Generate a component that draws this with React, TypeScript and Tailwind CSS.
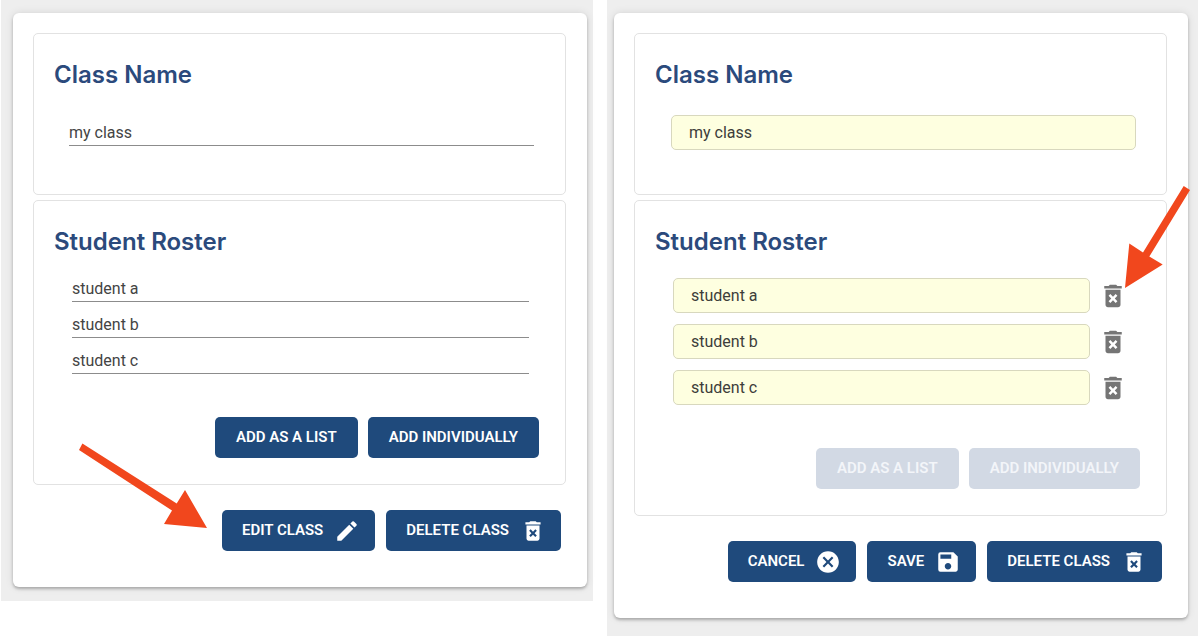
import { useState, type ReactNode } from "react";
import { MdCancel, MdDeleteForever, MdEdit, MdSave } from "react-icons/md";

const students = ["student a", "student b", "student c"];

function Section({ children }: { children: ReactNode }) {
  return <section className="rounded-[5px] border border-[#e2e2e2] px-5 pt-[27px]">{children}</section>;
}

function Heading({ children }: { children: ReactNode }) {
  return (
    <h2 className="font-[Inter,sans-serif] text-2xl leading-7 font-semibold text-[#2b4a7c]">{children}</h2>
  );
}

function Field({ id, label, value, editing }: { id: string; label?: string; value: string; editing: boolean }) {
  const [text, setText] = useState(value);
  return (
    <input
      id={id}
      type="text"
      aria-label={label}
      value={text}
      readOnly={!editing}
      onChange={(event) => setText(event.target.value)}
      className={
        editing
          ? "h-[35px] w-full min-w-0 rounded-[5px] border border-[#d8d8be] bg-[#feffe0] px-[17px] text-base leading-6 text-[#3d3d3a] outline-none"
          : "h-[31px] w-full min-w-0 border-b border-[#8c8c8c] bg-transparent pt-1 text-base leading-6 text-[#444] outline-none"
      }
    />
  );
}

function Button({ children, icon, disabled }: { children: ReactNode; icon?: ReactNode; disabled?: boolean }) {
  return (
    <button
      type="button"
      disabled={disabled}
      className={`flex h-[41px] items-center gap-[11px] rounded-[5px] bg-[#1f4a7c] text-[15px] font-semibold whitespace-nowrap text-white disabled:bg-[#d2d9e4] disabled:text-[#f3f5f9] ${icon ? "pr-[15px] pl-5" : "px-[21px]"}`}
    >
      {children}
      {icon}
    </button>
  );
}

function ClassCard({ id, editing, children }: { id: string; editing: boolean; children: ReactNode }) {
  return (
    <div className="flex flex-col rounded-md bg-white pt-5 pr-[21px] pb-9 pl-5 shadow-[0_2px_3px_rgba(0,0,0,0.25),0_0_8px_rgba(0,0,0,0.1)]">
      <div className="flex flex-col gap-[5px]">
        <Section>
          <Heading>
            <label htmlFor={`${id}-name`}>Class Name</label>
          </Heading>
          <div className={`mt-[26px] flex ${editing ? "mr-[10px] ml-4 pb-[44px]" : "mr-[11px] ml-[15px] pb-12"}`}>
            <Field id={`${id}-name`} value="my class" editing={editing} />
          </div>
        </Section>
        <Section>
          <Heading>Student Roster</Heading>
          <ul className={editing ? "mt-[22px] mr-[18px] ml-[18px] flex flex-col gap-[11px]" : "mt-[15px] mr-4 ml-[18px] flex flex-col gap-[5px]"}>
            {students.map((name, index) => (
              <li key={name} className="flex items-center gap-2">
                <Field id={`${id}-student-${index}`} label={`Student ${index + 1}`} value={name} editing={editing} />
                {editing && (
                  <button type="button" aria-label={`Delete ${name}`} className="relative shrink-0 text-[#757575]">
                    <MdDeleteForever className="size-[30px]" />
                    {index === 0 && (
                      <svg
                        viewBox="0 0 66 102"
                        aria-hidden="true"
                        className="pointer-events-none absolute bottom-[23px] left-[27px] h-[102px] w-[66px] max-w-none"
                      >
                        <path
                          d="M58.7 0 65 4 24.3 70.6 37.7 78.6 0 102 4.3 57.6 18 66.6Z"
                          fill="#f1471d"
                        />
                      </svg>
                    )}
                  </button>
                )}
              </li>
            ))}
          </ul>
          <div className="mt-[43px] mr-[6px] flex flex-wrap justify-end gap-[10px] pb-[26px]">
            <Button disabled={editing}>ADD AS A LIST</Button>
            <Button disabled={editing}>ADD INDIVIDUALLY</Button>
          </div>
        </Section>
      </div>
      <div className="mt-[25px] mr-[5px] flex flex-wrap justify-end gap-[11px]">{children}</div>
    </div>
  );
}

export default function App() {
  return (
    <main className="grid grid-cols-[592fr_591fr] items-start gap-[14px] bg-white pr-[2px] pl-px font-[Roboto,sans-serif]">
      <div className="bg-[#eeeeee] pt-[13px] pr-[6px] pb-[14px] pl-3">
        <ClassCard id="view" editing={false}>
          <div className="relative">
            <Button icon={<MdEdit className="size-[26px]" />}>EDIT CLASS</Button>
            <svg
              viewBox="0 0 128 86"
              aria-hidden="true"
              className="pointer-events-none absolute right-full bottom-[22px] mr-[15px] h-[86px] w-[128px] max-w-none"
            >
              <path d="M3.4 0.5 97.7 60.5 106 47 128 85 85 81 93 67.5 0 7Z" fill="#f1471d" />
            </svg>
          </div>
          <Button icon={<MdDeleteForever className="size-[26px]" />}>DELETE CLASS</Button>
        </ClassCard>
      </div>
      <div className="bg-[#eeeeee] pt-[13px] pr-[10px] pb-[18px] pl-[7px]">
        <ClassCard id="edit" editing>
          <Button icon={<MdCancel className="size-[26px]" />}>CANCEL</Button>
          <Button icon={<MdSave className="size-[26px]" />}>SAVE</Button>
          <Button icon={<MdDeleteForever className="size-[26px]" />}>DELETE CLASS</Button>
        </ClassCard>
      </div>
    </main>
  );
}
